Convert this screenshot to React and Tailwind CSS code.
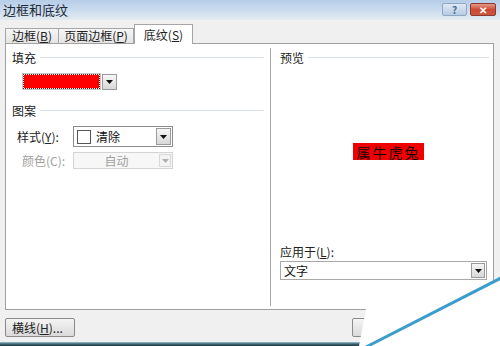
import React from 'react';

const font = { fontFamily: '"Noto Sans CJK SC", "Noto Sans", sans-serif' };

const Arrow = ({ disabled = false, className = "" }) => (
  <div className={`flex items-center justify-center border ${disabled ? 'border-[#d8d8d8] bg-[#f4f4f4]' : 'border-[#9a9a9a] bg-gradient-to-b from-[#f6f6f6] to-[#d8d8d8]'} ${className}`}>
    <svg width="7" height="4" viewBox="0 0 7 4">
      <path d="M0 0h7L3.5 4z" fill={disabled ? '#b0b0b0' : '#111'} />
    </svg>
  </div>
);

const GroupTitle = ({ children, className = "" }) => (
  <div className={`flex items-center gap-[4px] ${className}`}>
    <span className="text-[12px] leading-[14px] text-[#1a1a1a]">{children}</span>
    <div className="flex-1 h-[2px] border-t border-[#d5dfe5] border-b border-b-white" />
  </div>
);

export default function App() {
  return (
    <div className="relative w-[500px] h-[346px] overflow-hidden bg-[#f0f0f0]" style={font}>
      {/* title bar */}
      <div className="h-[20px] flex items-start justify-between pl-[3px] pr-[4px] pt-[2px] bg-gradient-to-b from-[#b6cde8] via-[#cadbee] to-[#e4ebf2]">
        <span className="text-[13px] leading-[15px] text-[#1e2a36]">边框和底纹</span>
        <div className="flex gap-[3px] pt-[1px]">
          <div className="w-[25px] h-[13px] rounded-[2px] border border-[#8ea8c4] bg-gradient-to-b from-[#dfe9f5] to-[#b6cbe2] flex items-center justify-center text-[10px] leading-none font-bold text-[#4a6a90]">?</div>
          <div className="w-[26px] h-[13px] rounded-[2px] border border-[#8d3a2c] bg-gradient-to-b from-[#e29a88] via-[#cc4a34] to-[#c8583f] flex items-center justify-center text-[10px] leading-none font-bold text-white">✕</div>
        </div>
      </div>

      {/* tabs */}
      <div className="flex items-end h-[23px] pl-[5px]">
        <div className="h-[15px] w-[54px] border border-b-0 border-[#a6a6a6] bg-gradient-to-b from-[#f6f6f6] to-[#e4e4e4] text-[12px] leading-[14px] text-[#222] flex items-center justify-center">
          边框(<u>B</u>)
        </div>
        <div className="h-[15px] w-[75px] border border-b-0 border-l-0 border-[#a6a6a6] bg-gradient-to-b from-[#f6f6f6] to-[#e4e4e4] text-[12px] leading-[14px] text-[#222] flex items-center justify-center">
          页面边框(<u>P</u>)
        </div>
        <div className="relative z-10 -mb-px h-[20px] w-[59px] border border-b-0 border-[#a6a6a6] bg-white text-[12px] leading-[14px] text-[#222] flex items-center justify-center">
          底纹(<u>S</u>)
        </div>
      </div>

      {/* panel */}
      <div className="ml-[5px] w-[489px] h-[267px] border border-[#a0a0a0] bg-white flex">
        {/* left */}
        <div className="w-[264px] pl-[6px] pr-[6px] pt-[7px]">
          <GroupTitle>填充</GroupTitle>
          <div className="ml-[10px] mt-[8px] flex items-center gap-[1px]">
            <div className="w-[79px] h-[17px] border border-[#c8c8c8] p-[1px]">
              <div className="w-full h-full bg-[#ff0000] outline-1 outline-dotted outline-[#8a0000]" />
            </div>
            <Arrow className="w-[15px] h-[16px]" />
          </div>

          <GroupTitle className="mt-[14px]">图案</GroupTitle>
          <div className="ml-[5px] mt-[8px] flex items-center">
            <span className="w-[56px] text-[12px] leading-[14px] text-[#222]">样式(<u>Y</u>):</span>
            <div className="w-[100px] h-[21px] border border-[#8c8c8c] bg-white flex items-center pl-[3px] pr-[1px]">
              <div className="w-[14px] h-[14px] border border-[#555] bg-white" />
              <span className="ml-[5px] text-[12px] leading-[14px] text-[#111]">清除</span>
              <div className="flex-1" />
              <Arrow className="w-[15px] h-[17px]" />
            </div>
          </div>
          <div className="ml-[10px] mt-[5px] flex items-center">
            <span className="w-[51px] text-[12px] leading-[14px] text-[#a0a0a0]">颜色(C):</span>
            <div className="w-[100px] h-[17px] border border-[#d4d4d4] bg-[#f7f7f7] flex items-center pr-[1px]">
              <span className="flex-1 text-center text-[12px] leading-[14px] text-[#a0a0a0]">自动</span>
              <Arrow disabled className="w-[12px] h-[13px]" />
            </div>
          </div>
        </div>

        {/* separator */}
        <div className="mt-[4px] h-[258px] w-[2px] border-l border-[#a8a8a8] border-r border-r-white" />

        {/* right */}
        <div className="flex-1 pl-[8px] pr-[4px] pt-[7px] flex flex-col">
          <GroupTitle>预览</GroupTitle>
          <div className="mt-[78px] ml-[73px] w-[71px] h-[17px] bg-[#f00000] flex items-center justify-center">
            <span className="text-[14px] leading-[16px] tracking-[2px] text-[#1a0000]">属牛虎兔</span>
          </div>
          <div className="mt-[85px] text-[12px] leading-[14px] text-[#222]">应用于(<u>L</u>):</div>
          <div className="mt-[2px] w-[207px] h-[19px] border border-[#a8a8a8] bg-white flex items-center pl-[3px] pr-[1px]">
            <span className="flex-1 text-[12px] leading-[14px] text-[#111]">文字</span>
            <Arrow className="w-[14px] h-[15px]" />
          </div>
        </div>
      </div>

      {/* bottom buttons */}
      <div className="flex items-start pt-[8px] pl-[5px]">
        <div className="w-[70px] h-[19px] rounded-[2px] border border-[#8a8a8a] bg-gradient-to-b from-[#f4f4f4] to-[#dadada] flex items-center pl-[6px] text-[12px] leading-[14px] text-[#222]">
          横线(<u>H</u>)...
        </div>
        <div className="ml-[277px] w-[70px] h-[19px] rounded-[2px] border border-[#8a8a8a] bg-gradient-to-b from-[#f4f4f4] to-[#dadada]" />
      </div>

      {/* bottom edge */}
      <div className="absolute left-0 bottom-0 w-full h-[4px] bg-gradient-to-b from-[#9cc6d6] via-[#3e6674] to-[#1f3a44]" />

      {/* page curl */}
      <svg className="absolute left-0 top-0" width="500" height="346" viewBox="0 0 500 346">
        <polygon points="366,309 488,285 500,281 500,346 359,346" fill="#ffffff" />
        <line x1="366" y1="347" x2="501" y2="278" stroke="#3a9dcc" strokeWidth="3" />
      </svg>
    </div>
  );
}
